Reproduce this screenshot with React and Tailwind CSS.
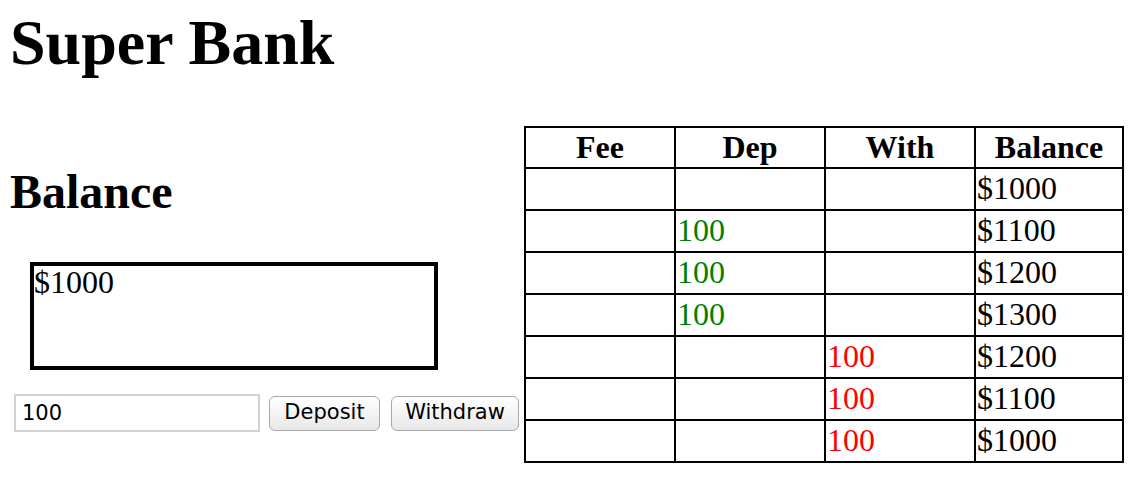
import React from "react";

const ROWS = [
  { dep: "", with: "", balance: "$1000" },
  { dep: "100", with: "", balance: "$1100" },
  { dep: "100", with: "", balance: "$1200" },
  { dep: "100", with: "", balance: "$1300" },
  { dep: "", with: "100", balance: "$1200" },
  { dep: "", with: "100", balance: "$1100" },
  { dep: "", with: "100", balance: "$1000" },
];

const HEADERS = ["Fee", "Dep", "With", "Balance"];

export default function App() {
  return (
    <div className="min-h-[484px] bg-white px-[8px] text-black font-['Liberation_Serif','Times_New_Roman',serif]">
      <h1 className="pl-[2px] pt-[11px] text-[64px] font-bold leading-none">Super Bank</h1>

      <div className="mt-[51px] flex items-start">
        {/* Left column: balance + controls */}
        <div className="w-[516px] shrink-0">
          <h2 className="mt-[42px] pl-[2px] text-[48px] font-bold leading-none">Balance</h2>
          <div className="ml-[22px] mt-[46px] h-[108px] w-[408px] border-4 border-black text-[32px] leading-none">
            $1000
          </div>
          <div className="mt-[24px] flex items-center font-['DejaVu_Sans',sans-serif] text-[21px]">
            <input
              defaultValue="100"
              className="ml-[6px] h-[38px] w-[246px] border-2 border-[#d2d2d2] bg-white pl-[6px] text-[21px] text-black outline-none"
            />
            <button className="ml-[9px] h-[35px] w-[111px] rounded-[6px] border border-[#a8a8a8] bg-gradient-to-b from-white to-[#e8e8e8] text-black">
              Deposit
            </button>
            <button className="ml-[11px] h-[35px] w-[128px] rounded-[6px] border border-[#a8a8a8] bg-gradient-to-b from-white to-[#e8e8e8] text-black">
              Withdraw
            </button>
          </div>
        </div>

        {/* Transaction table */}
        <table className="w-[600px] table-fixed border-separate border-spacing-0 text-[32px]">
          <colgroup>
            <col className="w-[152px]" />
            <col className="w-[150px]" />
            <col className="w-[150px]" />
            <col className="w-[148px]" />
          </colgroup>
          <thead>
            <tr>
              {HEADERS.map((h, i) => (
                <th
                  key={h}
                  className={`border-t-2 border-r-2 border-b-2 border-black pt-[1px] pb-[1px] text-center font-bold leading-[37px] ${i === 0 ? "border-l-2" : ""}`}
                >
                  {h}
                </th>
              ))}
            </tr>
          </thead>
          <tbody>
            {ROWS.map((r, i) => (
              <tr key={i}>
                <td className="border-l-2 border-r-2 border-b-2 border-black pt-[1px] pb-[2px] pl-[1px] leading-[37px]">&nbsp;</td>
                <td className="border-r-2 border-b-2 border-black pt-[1px] pb-[2px] pl-[1px] leading-[37px] text-[#008000]">{r.dep}</td>
                <td className="border-r-2 border-b-2 border-black pt-[1px] pb-[2px] pl-[1px] leading-[37px] text-[#ff0000]">{r.with}</td>
                <td className="border-r-2 border-b-2 border-black pt-[1px] pb-[2px] pl-[1px] leading-[37px]">{r.balance}</td>
              </tr>
            ))}
          </tbody>
        </table>
      </div>
    </div>
  );
}
